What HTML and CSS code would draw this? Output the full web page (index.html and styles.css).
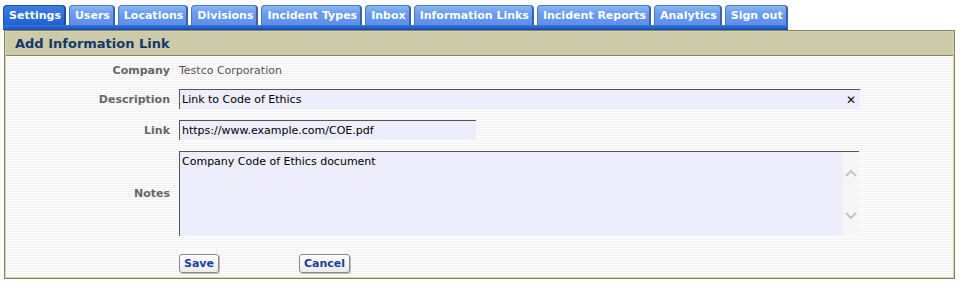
FILE: index.html
```html
<!DOCTYPE html>
<html lang="en">
<head>
    <meta charset="UTF-8">
    <title>Add Information Link</title>
    <link rel="stylesheet" href="styles.css">
</head>
<body>
    <!-- Top navigation tabs -->
    <div class="tabbar">
        <ul class="tabs">
            <li class="tab active">Settings</li>
            <li class="tab">Users</li>
            <li class="tab">Locations</li>
            <li class="tab">Divisions</li>
            <li class="tab">Incident Types</li>
            <li class="tab">Inbox</li>
            <li class="tab">Information Links</li>
            <li class="tab">Incident Reports</li>
            <li class="tab">Analytics</li>
            <li class="tab">Sign out</li>
        </ul>
        <div class="tab-rule"></div>
    </div>

    <div class="panel">
        <div class="panel-head">Add Information Link</div>
        <form class="panel-body">
            <div class="row row-company">
                <span class="lbl">Company</span>
                <span class="value">Testco Corporation</span>
            </div>
            <div class="row">
                <label class="lbl" for="description">Description</label>
                <div class="field field-wide">
                    <input type="text" id="description" value="Link to Code of Ethics">
                    <span class="clear">&#x2715;</span>
                </div>
            </div>
            <div class="row">
                <label class="lbl" for="link">Link</label>
                <div class="field field-short">
                    <input type="text" id="link" value="https://www.example.com/COE.pdf">
                </div>
            </div>
            <div class="row row-notes">
                <label class="lbl" for="notes">Notes</label>
                <div class="field field-notes">
                    <textarea id="notes">Company Code of Ethics document</textarea>
                    <div class="scroller">
                        <svg width="12" height="8" viewBox="0 0 12 8"><path d="M1 7 L6 2 L11 7" fill="none" stroke="#c4c4c4" stroke-width="2"/></svg>
                        <svg width="12" height="8" viewBox="0 0 12 8"><path d="M1 1 L6 6 L11 1" fill="none" stroke="#c4c4c4" stroke-width="2"/></svg>
                    </div>
                </div>
            </div>
            <div class="row row-buttons">
                <span class="lbl"></span>
                <div class="buttons">
                    <button type="button">Save</button>
                    <button type="button">Cancel</button>
                </div>
            </div>
        </form>
    </div>
</body>
</html>
```

FILE: styles.css
```css
* {
    box-sizing: border-box;
    margin: 0;
    padding: 0;
}

body {
    font-family: "DejaVu Sans", Verdana, sans-serif;
    font-size: 11px;
    background-color: #fff;
    color: #000;
    padding: 5px 5px 0 3px;
}

/* Tabs */
.tabbar {
    display: inline-block;
}

.tabs {
    display: flex;
    gap: 3px;
    list-style: none;
}

.tab {
    height: 20px;
    line-height: 20px;
    padding: 0 3px 0 5px;
    font-weight: bold;
    color: #fff;
    background: linear-gradient(#8cb6f4, #6a9cee 40%, #5b8fe8);
    border: 1px solid #4a78c8;
    border-bottom: none;
    border-right: 2px solid #3a62a8;
    border-radius: 4px 4px 0 0;
}

.tab.active {
    background: linear-gradient(#3f7ee0, #1f62d4);
    border-color: #1a4fb0;
}

.tab-rule {
    height: 5px;
    background: linear-gradient(#3d78dc, #1f5ecf 60%, #1848a8);
}

/* Panel */
.panel {
    margin: 0 0 0 1px;
    border: 1px solid #84855c;
    box-shadow: inset 0 0 0 1px #d4d3b8;
    padding: 1px;
}

.panel-head {
    height: 24px;
    line-height: 24px;
    padding-left: 9px;
    background-color: #cccaa8;
    border-bottom: 1px solid #86875e;
    font-size: 13px;
    font-weight: bold;
    color: #14386a;
}

.panel-body {
    padding: 7px 0 4px;
    background: repeating-linear-gradient(#ffffff 0 1px, #f2f2f2 1px 2px);
    display: flex;
    flex-direction: column;
    gap: 11px;
}

.row {
    display: flex;
    align-items: center;
    gap: 9px;
}

.lbl {
    width: 164px;
    flex-shrink: 0;
    text-align: right;
    font-weight: bold;
    color: #666;
}

.row-company {
    height: 15px;
}

.value {
    color: #555;
}

.field {
    display: flex;
    align-items: center;
    background-color: #ededfc;
    border-top: 1px solid #555;
    border-left: 1px solid #555;
}

.field input,
.field textarea {
    font-family: "DejaVu Sans", Verdana, sans-serif;
    font-size: 11px;
    color: #000;
    background: transparent;
    border: none;
    outline: none;
}

.field input {
    flex: 1;
    height: 19px;
    padding: 0 2px;
}

.field-wide {
    width: 681px;
    height: 20px;
}

.field-short {
    width: 297px;
    height: 20px;
}

.clear {
    width: 18px;
    font-size: 12px;
    font-weight: bold;
    color: #111;
    text-align: center;
}

.field-notes {
    width: 680px;
    height: 85px;
    align-items: stretch;
}

.field-notes textarea {
    flex: 1;
    resize: none;
    overflow: hidden;
    padding: 3px 2px;
}

.scroller {
    width: 16px;
    background-color: #f6f6f6;
    display: flex;
    flex-direction: column;
    justify-content: space-between;
    align-items: center;
    padding: 17px 0 16px;
}

.row-buttons {
    margin-top: 7px;
}

.buttons {
    display: flex;
    gap: 80px;
}

button {
    height: 19px;
    padding: 0 4px;
    font-family: "DejaVu Sans", Verdana, sans-serif;
    font-size: 11px;
    font-weight: bold;
    color: #1a3f9c;
    background: linear-gradient(#ffffff, #ececec);
    border: 1px solid #8a8a8a;
    border-radius: 3px;
    box-shadow: 1px 1px 0 #b8b8b8;
}
```
